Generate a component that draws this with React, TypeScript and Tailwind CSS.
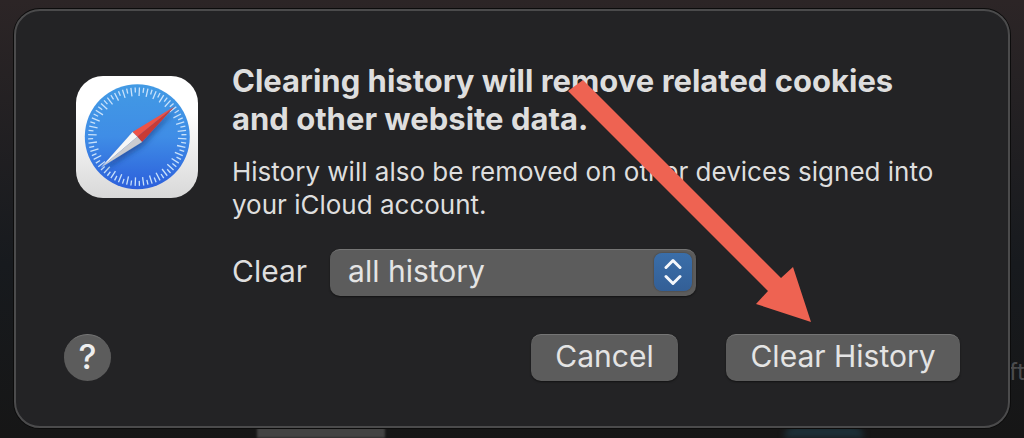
import { useState } from 'react'

const ranges = ['the last hour', 'today', 'today and yesterday', 'all history']

const ticks = Array.from({ length: 72 }, (_, i) => i)

const buttonClass =
  'h-[47px] rounded-[10px] border-t border-[#757575] bg-[#5c5c5c] pb-[3px] text-[30px] leading-[43px] text-[#e4e4e4] shadow-[0_1px_2px_rgba(0,0,0,0.5)]'

function SafariIcon() {
  return (
    <svg viewBox="0 0 122 122" className="size-[122px] shrink-0" aria-hidden="true">
      <defs>
        <linearGradient id="tile" x1="0" y1="0" x2="0" y2="1">
          <stop offset="0.3" stopColor="#ffffff" />
          <stop offset="1" stopColor="#d8d8d8" />
        </linearGradient>
        <linearGradient id="dial" x1="0" y1="0" x2="0" y2="1">
          <stop offset="0" stopColor="#429ae4" />
          <stop offset="0.5" stopColor="#3f8de6" />
          <stop offset="1" stopColor="#2c5fdb" />
        </linearGradient>
        <filter id="needleShadow" x="-20%" y="-20%" width="140%" height="150%">
          <feDropShadow dx="1" dy="4" stdDeviation="2.5" floodColor="#12326f" floodOpacity="0.5" />
        </filter>
      </defs>
      <rect width="122" height="122" rx="27" fill="url(#tile)" />
      <circle cx="61.3" cy="60.7" r="52.5" fill="url(#dial)" />
      {ticks.map((i) => (
        <line
          key={i}
          x1="61.3"
          x2="61.3"
          y1="11.5"
          y2={i % 2 === 0 ? 20 : 16.5}
          stroke="#c9e2fb"
          strokeWidth="1.3"
          transform={`rotate(${i * 5 + 2.5} 61.3 60.7)`}
        />
      ))}
      <g filter="url(#needleShadow)">
        <path d="M98.5 30.5 L56.5 56 L61.3 60.7 Z" fill="#ee5246" />
        <path d="M98.5 30.5 L61.3 60.7 L66 66 Z" fill="#c93a34" />
        <path d="M25 91.5 L56.5 56 L61.3 60.7 Z" fill="#f6f6f6" />
        <path d="M25 91.5 L61.3 60.7 L66 66 Z" fill="#cbccd0" />
      </g>
    </svg>
  )
}

export default function App() {
  const [range, setRange] = useState('all history')

  return (
    <div className="relative min-h-screen overflow-hidden bg-linear-to-b from-[#2c2526] via-[#171a1e] via-60% to-[#161616] px-[14px] py-[9px] font-[Inter,'Liberation_Sans',sans-serif]">
      {/* Window contents behind the sheet */}
      <div className="absolute bottom-0 left-[257px] h-3 w-[128px] bg-[#434343] blur-[1px]" />
      <div className="absolute right-[160px] bottom-0 h-3 w-[80px] rounded-t-full bg-[#1c3038] blur-[3px]" />
      <span className="absolute top-[358px] left-[1009px] text-[24px] leading-7 text-[#4b4b4d]">ft</span>

      <div
        role="dialog"
        aria-labelledby="sheet-title"
        className="relative rounded-[26px] border-2 border-[#4b4b4c] bg-[#232325] px-12 pt-[51px] pb-[45px] text-[#dedede] shadow-[0_0_0_1px_#0c0c0c]"
      >
        <div className="flex gap-[34px] pl-3">
          <div className="pt-[14px]">
            <SafariIcon />
          </div>
          <div className="min-w-0 flex-1">
            <h1 id="sheet-title" className="text-[31px] leading-[38px] font-bold">
              Clearing history will remove related cookies
              <br />
              and other website data.
            </h1>
            <p className="mt-[17px] text-[26px] leading-[33px]">
              History will also be removed on other devices signed into
              <br />
              your iCloud account.
            </p>
            <div className="mt-7 flex items-center gap-[23px]">
              <label htmlFor="range" className="pb-[3px] text-[30px] leading-[43px]">
                Clear
              </label>
              <div className="relative w-[366px]">
                <select
                  id="range"
                  value={range}
                  onChange={(e) => setRange(e.target.value)}
                  className={`${buttonClass} block w-full appearance-none pr-12 pl-[18px]`}
                >
                  {ranges.map((r) => (
                    <option key={r}>{r}</option>
                  ))}
                </select>
                <span className="pointer-events-none absolute top-1 right-1 flex size-[38px] items-center justify-center rounded-lg bg-linear-to-b from-[#3a6ea9] to-[#335f96] shadow-[0_0_2px_rgba(0,0,0,0.4)]">
                  <svg
                    viewBox="0 0 18 28"
                    className="h-7 w-[18px]"
                    fill="none"
                    stroke="#f4f7fb"
                    strokeWidth="3"
                    strokeLinecap="round"
                    strokeLinejoin="round"
                    aria-hidden="true"
                  >
                    <path d="M2 9.5 L9 2.5 L16 9.5" />
                    <path d="M2 18.5 L9 25.5 L16 18.5" />
                  </svg>
                </span>
              </div>
            </div>
          </div>
        </div>

        <div className="mt-[38px] flex items-center">
          <button
            type="button"
            aria-label="Help"
            className="size-[47px] rounded-full border-t border-[#757575] bg-[#5c5c5c] pb-[3px] text-[34px] leading-[43px] font-medium text-[#eeeeee]"
          >
            ?
          </button>
          <button type="button" className={`${buttonClass} ml-auto w-[147px]`}>
            Cancel
          </button>
          <button type="button" className={`${buttonClass} ml-12 w-[234px]`}>
            Clear History
          </button>
        </div>
      </div>

      {/* Arrow pointing at the confirm button */}
      <svg
        viewBox="568 80 243 242"
        className="pointer-events-none absolute top-[80px] left-[568px] h-[242px] w-[243px]"
        aria-hidden="true"
      >
        <path d="M583 80 L781 278 L793 267 L811 322 L756 304 L768 291 L568 91 Z" fill="#ee6352" />
      </svg>
    </div>
  )
}
